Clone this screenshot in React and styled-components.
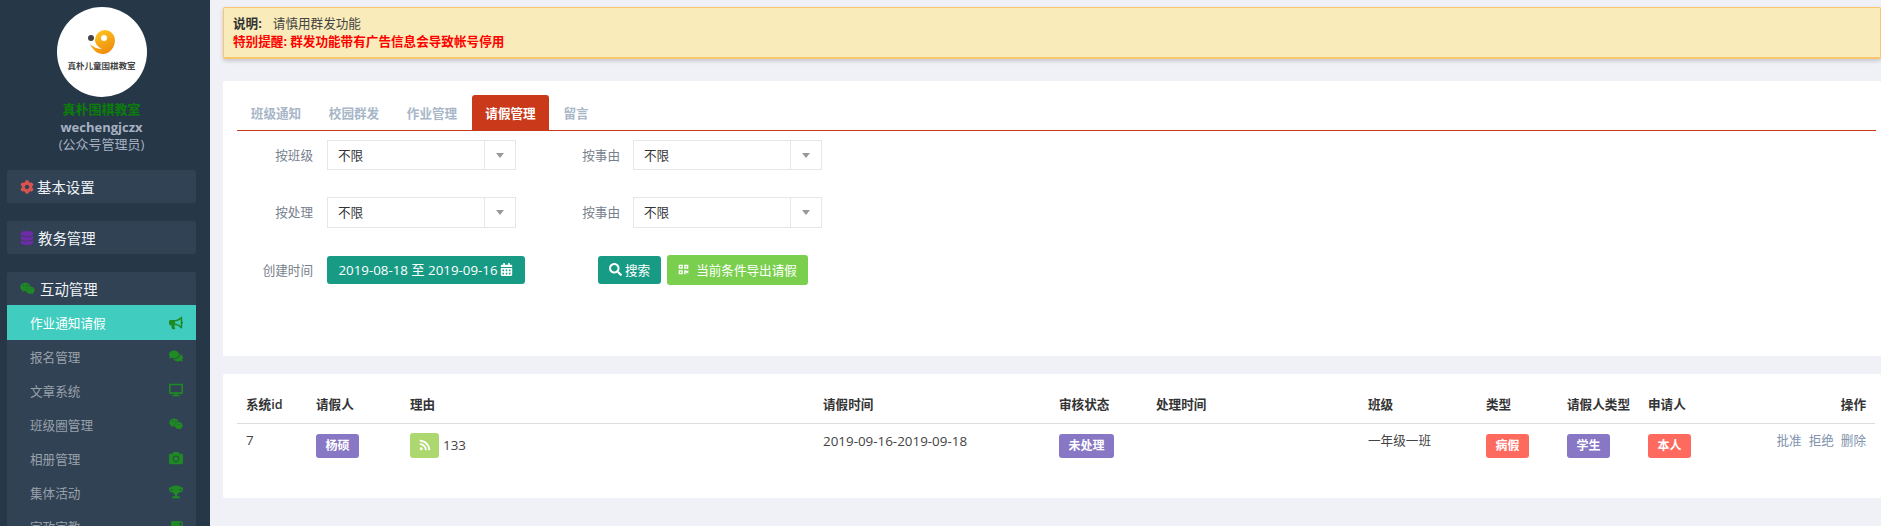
import React from 'react';
import styled, { createGlobalStyle } from 'styled-components';
import { FaCog, FaDatabase, FaWeixin, FaBullhorn, FaComments, FaDesktop, FaCamera, FaTrophy, FaSearch, FaCalendarAlt, FaRss, FaQrcode, FaCoffee } from 'react-icons/fa';

const Global = createGlobalStyle`
  html, body { margin: 0; padding: 0; height: 526px; overflow: hidden; background: #f0f1f7; }
  * { box-sizing: border-box; }
  body { font-family: "Open Sans", "Noto Sans CJK SC", sans-serif; font-size: 12.6px; color: #333; }
`;
const Page = styled.div`display: flex; height: 526px; overflow: hidden;`;
const Sidebar = styled.aside`width: 210px; flex: none; background: #263748; padding: 7px 14px 0 7px; overflow: hidden;`;
const Profile = styled.div`display: flex; flex-direction: column; align-items: center; margin-bottom: 17px;`;
const LogoCircle = styled.div`
  width: 90px; height: 90px; border-radius: 50%; background: #fff; display: flex; flex-direction: column; align-items: center;
  padding-top: 23px;
  svg { flex: none; }
`;
const LogoText = styled.div`font-size: 8.5px; font-weight: 700; color: #444; line-height: 12px; margin-top: 4px; white-space: nowrap;`;
const OrgName = styled.div`color: #0a7d0a; font-weight: 700; font-size: 13px; line-height: 18px; margin-top: 3px;`;
const Account = styled.div`color: #a7b1c2; font-weight: 700; font-size: 13px; line-height: 17px; margin-top: 1px;`;
const Role = styled.div`color: #a7b1c2; font-size: 13px; line-height: 17px;`;
const Group = styled.section`background: #314254; border-radius: 2px; margin-bottom: 18px;`;
const GroupHead = styled.div`
  height: 33px; display: flex; align-items: center; padding-left: 13px; color: #eef2f6; font-size: 14.4px;
  svg { color: ${p => p.$c}; font-size: ${p => p.$is || 14}px; margin-right: ${p => p.$gap || 4}px; }
`;
const Item = styled.div`
  height: ${p => p.$active ? 35 : 34}px; display: flex; align-items: center; justify-content: space-between;
  padding: 0 13px ${p => p.$active ? 0 : 2}px 23px;
  font-size: 12.6px; color: ${p => p.$active ? '#fff' : '#99a1ab'}; background: ${p => p.$active ? '#40cdc0' : 'transparent'};
  svg { color: #1f8a24; font-size: 14px; }
`;
const Main = styled.main`flex: 1; min-width: 0; padding: 7px 0 0 13px;`;
const Alert = styled.div`
  height: 52px; background: #f9ecba; border: 1px solid #f7c66f; border-bottom-width: 2px; border-radius: 2px; box-shadow: 0 2px 4px rgba(0,0,0,.18);
  padding: 7px 9px; font-size: 12.6px; line-height: 17.5px; color: #444;
  margin-bottom: 22px;
`;
const AlertTitle = styled.b`font-weight: 700; margin-right: 11px; color: #333;`;
const AlertWarn = styled.div`color: #f00; font-weight: 700;`;
const Panel = styled.div`background: #fff; border-radius: 2px; margin-bottom: 18px; height: ${p => p.$h}px; padding: ${p => p.$pad};`;
const Tabs = styled.div`display: flex; height: 36px; border-bottom: 1px solid #c9391a; align-items: flex-end;`;
const Tab = styled.div`
  width: ${p => p.$w || 78}px; height: 35px; display: flex; align-items: center; justify-content: center; font-size: 12.6px; font-weight: 600;
  margin-left: ${p => p.$active ? 1 : 0}px;
  color: ${p => p.$active ? '#fff' : '#a8b6c8'}; background: ${p => p.$active ? '#c9391a' : 'transparent'}; border-radius: 3px 3px 0 0;
`;
const FormRow = styled.div`display: flex; align-items: center; height: ${p => p.$h}px; margin-top: ${p => p.$mt}px;`;
const Label = styled.div`color: #76808c; font-size: 12.6px; text-align: right; width: ${p => p.$w}px; margin-right: ${p => p.$mr}px; flex: none; padding-bottom: 2px;`;
const Select = styled.div`
  width: 189px; height: 100%; border: 1px solid #e5e6e7; display: flex; align-items: center; justify-content: space-between; background: #fff;
  padding-left: 10px; font-size: 12.6px; color: #333; flex: none;
`;
const SelectText = styled.span`margin-bottom: 2px;`;
const Caret = styled.span`
  width: 31px; height: 100%; border-left: 1px solid #e5e6e7; display: flex; align-items: center; justify-content: center;
  &::after { content: ""; border-style: solid; border-width: 5px 4.5px 0; border-color: #999 transparent transparent; }
`;
const Btn = styled.div`
  height: ${p => p.$h || 28}px; width: ${p => p.$w}px; margin-right: ${p => p.$mr || 0}px; background: ${p => p.$bg}; color: #fff; border-radius: 3px; font-size: ${p => p.$fs || 12.6}px;
  display: flex; align-items: center; justify-content: center; gap: ${p => p.$gap || 3}px; flex: none; white-space: nowrap; padding-bottom: 2px;
  svg { font-size: ${p => p.$is || 13}px; }
`;
const Table = styled.table`width: 1638px; table-layout: fixed; border-collapse: collapse; font-size: 12.6px;`;
const Th = styled.th`
  height: 37px; padding: 0 9px 2px; text-align: ${p => p.$right ? 'right' : 'left'}; font-weight: 600; color: #333; font-size: 12.6px; border-bottom: 1px solid #ddd; white-space: nowrap;
`;
const Td = styled.td`
  padding: ${p => p.$text ? 8 : 9}px 9px 0; vertical-align: top; color: #444; line-height: 17px; text-align: ${p => p.$right ? 'right' : 'left'}; white-space: nowrap;
  font-size: ${p => p.$latin ? 13.4 : 12.6}px;
`;
const Badge = styled.span`
  display: inline-flex; align-items: center; justify-content: center; height: 24px; width: ${p => p.$w || 43}px; background: ${p => p.$bg}; color: #fff;
  font-size: 12px; font-weight: 700; border-radius: 3px; margin-top: 1px;
`;
const Reason = styled.div`display: flex; align-items: center; gap: 4px; color: #444;`;
const RssBox = styled.span`
  width: 29px; height: 25px; background: #add76f; color: #fff; border-radius: 3px; display: inline-flex; align-items: center; justify-content: center; font-size: 12px;
`;
const Action = styled.a`color: #8092ad; font-size: 12.6px; margin-left: 7px;`;

const menu = [
  ['报名管理', <FaComments />], ['文章系统', <FaDesktop />], ['班级圈管理', <FaWeixin />],
  ['相册管理', <FaCamera />], ['集体活动', <FaTrophy />], ['家政家教', <FaCoffee />],
];
const widths = [70, 94, 413, 236, 97, 212, 118, 81, 81, 81, 155];
const heads = ['系统id', '请假人', '理由', '请假时间', '审核状态', '处理时间', '班级', '类型', '请假人类型', '申请人'];

const LogoMark = () => (
  <svg width="30" height="26" viewBox="0 0 30 26">
    <defs>
      <linearGradient id="lg" x1="0.2" y1="0" x2="0.7" y2="1">
        <stop offset="0" stopColor="#ffc820" />
        <stop offset="1" stopColor="#ee8a0c" />
      </linearGradient>
    </defs>
    <circle cx="4" cy="8" r="3" fill="#444" />
    <path fill="url(#lg)" d="M18 0a10 10 0 0 1 10 10c0 8-6 14-12 14-6 0-10-4-13-10 3 3 8 5 12 5-4-2-7-5-7-9A10 10 0 0 1 18 0z" />
    <circle cx="17" cy="8" r="3" fill="#fff" />
  </svg>
);

const Choice = () => <Select><SelectText>不限</SelectText><Caret /></Select>;

export default function App() {
  return (
    <Page>
      <Global />
      <Sidebar>
        <Profile>
          <LogoCircle>
            <LogoMark />
            <LogoText>真朴儿童围棋教室</LogoText>
          </LogoCircle>
          <OrgName>真朴围棋教室</OrgName>
          <Account>wechengjczx</Account>
          <Role>(公众号管理员)</Role>
        </Profile>
        <Group><GroupHead $c="#d9534f" $gap={3}><FaCog />基本设置</GroupHead></Group>
        <Group><GroupHead $c="#6f2aa8"><FaDatabase />教务管理</GroupHead></Group>
        <Group>
          <GroupHead $c="#1f8a24" $gap={5} $is={15}><FaWeixin />互动管理</GroupHead>
          <Item $active>作业通知请假<FaBullhorn /></Item>
          {menu.map(([t, i]) => <Item key={t}>{t}{i}</Item>)}
        </Group>
      </Sidebar>
      <Main>
        <Alert>
          <div><AlertTitle>说明:</AlertTitle>请慎用群发功能</div>
          <AlertWarn>特别提醒: 群发功能带有广告信息会导致帐号停用</AlertWarn>
        </Alert>
        <Panel $h={275} $pad="14px 5px 0 14px">
          <Tabs>
            <Tab>班级通知</Tab><Tab>校园群发</Tab><Tab>作业管理</Tab><Tab $active $w={77}>请假管理</Tab><Tab $w={54}>留言</Tab>
          </Tabs>
          <FormRow $h={30} $mt={9}>
            <Label $w={76} $mr={14}>按班级</Label><Choice />
            <Label $w={104} $mr={13}>按事由</Label><Choice />
          </FormRow>
          <FormRow $h={31} $mt={27}>
            <Label $w={76} $mr={14}>按处理</Label><Choice />
            <Label $w={104} $mr={13}>按事由</Label><Choice />
          </FormRow>
          <FormRow $h={30} $mt={27}>
            <Label $w={76} $mr={14}>创建时间</Label>
            <Btn $w={198} $bg="#179b85" $mr={73} $fs={13.3}>2019-08-18 至 2019-09-16 <FaCalendarAlt /></Btn>
            <Btn $w={63} $bg="#179b85" $mr={6}><FaSearch />搜索</Btn>
            <Btn $w={141} $h={30} $bg="#7bcf4f" $gap={7} $is={11}><FaQrcode />当前条件导出请假</Btn>
          </FormRow>
        </Panel>
        <Panel $h={124} $pad="12px 0 0 14px">
          <Table>
            <colgroup>{widths.map((w, i) => <col key={i} width={w} />)}</colgroup>
            <thead>
              <tr>{heads.map(h => <Th key={h}>{h}</Th>)}<Th $right>操作</Th></tr>
            </thead>
            <tbody>
              <tr>
                <Td $latin $text>7</Td>
                <Td><Badge $bg="#8777c5">杨硕</Badge></Td>
                <Td $latin><Reason><RssBox><FaRss /></RssBox>133</Reason></Td>
                <Td $latin>2019-09-16-2019-09-18</Td>
                <Td><Badge $bg="#8777c5" $w={55}>未处理</Badge></Td>
                <Td></Td>
                <Td $text>一年级一班</Td>
                <Td><Badge $bg="#ff6a5f">病假</Badge></Td>
                <Td><Badge $bg="#8777c5">学生</Badge></Td>
                <Td><Badge $bg="#ff6a5f">本人</Badge></Td>
                <Td $right $text><Action>批准</Action><Action>拒绝</Action><Action>删除</Action></Td>
              </tr>
            </tbody>
          </Table>
        </Panel>
      </Main>
    </Page>
  );
}
